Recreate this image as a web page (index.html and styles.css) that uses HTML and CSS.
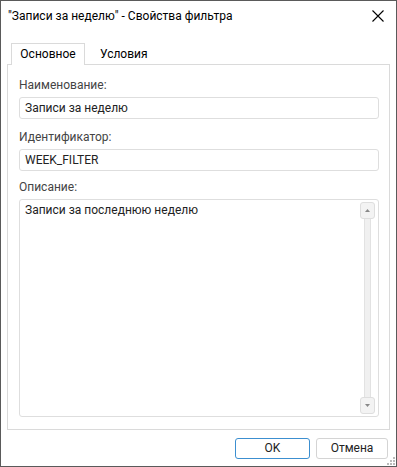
FILE: index.html
```html
<!DOCTYPE html>
<html lang="ru">
<head>
  <meta charset="UTF-8">
  <title>Свойства фильтра</title>
  <link rel="stylesheet" href="styles.css">
</head>
<body>

<div class="dialog">
  <div class="title-bar">
    <span class="title">"Записи за неделю" - Свойства фильтра</span>
    <svg class="close" width="12" height="12" viewBox="0 0 12 12">
      <path d="M0.5 0.5 L11.5 11.5 M11.5 0.5 L0.5 11.5" stroke="#000" stroke-width="1.1" fill="none"/>
    </svg>
  </div>

  <div class="tabs">
    <div class="tab active">Основное</div>
    <div class="tab">Условия</div>
  </div>

  <div class="panel">
    <div class="field">
      <label>Наименование:</label>
      <div class="input">Записи за неделю</div>
    </div>
    <div class="field">
      <label>Идентификатор:</label>
      <div class="input">WEEK_FILTER</div>
    </div>
    <div class="field grow">
      <label>Описание:</label>
      <div class="textarea">
        <div class="textarea-text">Записи за последнюю неделю</div>
        <div class="scrollbar">
          <div class="scroll-btn">
            <svg width="5" height="3" viewBox="0 0 5 3"><path d="M0 3 L2.5 0 L5 3 Z" fill="#888"/></svg>
          </div>
          <div class="scroll-track"></div>
          <div class="scroll-btn">
            <svg width="5" height="3" viewBox="0 0 5 3"><path d="M0 0 L2.5 3 L5 0 Z" fill="#888"/></svg>
          </div>
        </div>
      </div>
    </div>
  </div>

  <div class="footer">
    <button class="btn default">OK</button>
    <button class="btn cancel">Отмена</button>
  </div>

  <svg class="grip" width="9" height="9" viewBox="0 0 9 9">
    <rect x="7" y="1" width="2" height="2" fill="#bbb"/>
    <rect x="4" y="4" width="2" height="2" fill="#bbb"/>
    <rect x="7" y="4" width="2" height="2" fill="#bbb"/>
    <rect x="1" y="7" width="2" height="2" fill="#bbb"/>
    <rect x="4" y="7" width="2" height="2" fill="#bbb"/>
    <rect x="7" y="7" width="2" height="2" fill="#bbb"/>
  </svg>
</div>

</body>
</html>
```

FILE: styles.css
```css
/* Page */
body {
  margin: 0;
  font-family: Roboto, 'Noto Sans', sans-serif;
  font-size: 12px;
  background-color: #fff;
}

/* Dialog window */
.dialog {
  position: relative;
  box-sizing: border-box;
  width: 397px;
  height: 467px;
  border: 1px solid #5a5a5a;
  background-color: #fff;
  display: flex;
  flex-direction: column;
}

.title-bar {
  height: 30px;
  display: flex;
  align-items: center;
  justify-content: space-between;
  padding: 0 12px 0 7px;
}

.title {
  color: #000;
  font-size: 12px;
}

/* Tabs */
.tabs {
  display: flex;
  margin: 12px 0 0 10px;
  height: 22px;
  position: relative;
  z-index: 1;
}

.tab {
  padding: 0 14px;
  line-height: 21px;
  color: #000;
  border: 1px solid transparent;
  border-bottom: none;
}

.tab.active {
  box-sizing: border-box;
  width: 74px;
  padding: 0;
  text-align: center;
  border-color: #dadada;
  background-color: #fff;
  height: 22px;
}

.panel {
  flex: 1;
  margin: -1px 6px 0 6px;
  border: 1px solid #dadada;
  padding: 12px 10px 12px 11px;
  display: flex;
  flex-direction: column;
}

.field {
  display: flex;
  flex-direction: column;
}

.field label {
  color: #444;
  line-height: 16px;
  margin-bottom: 4px;
}

.field + .field {
  margin-top: 10px;
}

.field.grow {
  flex: 1;
  margin-top: 8px;
}

.input {
  height: 20px;
  line-height: 20px;
  border: 1px solid #dedede;
  border-radius: 3px;
  padding: 0 5px;
  color: #222;
}

.textarea {
  flex: 1;
  border: 1px solid #dedede;
  border-radius: 3px;
  display: flex;
  color: #222;
}

.textarea-text {
  flex: 1;
  padding: 2px 5px;
  line-height: 16px;
}

/* Scroll bar */
.scrollbar {
  width: 17px;
  margin: 2px 2px 2px 0;
  display: flex;
  flex-direction: column;
  align-items: center;
}

.scroll-btn {
  box-sizing: border-box;
  width: 15px;
  height: 17px;
  border: 1px solid #dedede;
  border-radius: 3px;
  background-color: #f3f3f3;
  display: flex;
  align-items: center;
  justify-content: center;
}

.scroll-track {
  flex: 1;
  width: 5px;
  background-color: #f0f0f0;
  border-left: 1px solid #e2e2e2;
  border-right: 1px solid #e2e2e2;
}

/* Footer buttons */
.footer {
  height: 36px;
  display: flex;
  justify-content: flex-end;
  align-items: center;
  gap: 6px;
  padding-right: 8px;
}

.btn {
  width: 75px;
  height: 21px;
  font-family: inherit;
  font-size: 12px;
  color: #222;
  background-color: #fff;
  border: 1px solid #d4d4d4;
  border-radius: 3px;
  padding: 0;
}

.btn.cancel {
  width: 72px;
}

.btn.default {
  border-color: #3c8fd0;
}

.grip {
  position: absolute;
  right: 1px;
  bottom: 1px;
}
```
